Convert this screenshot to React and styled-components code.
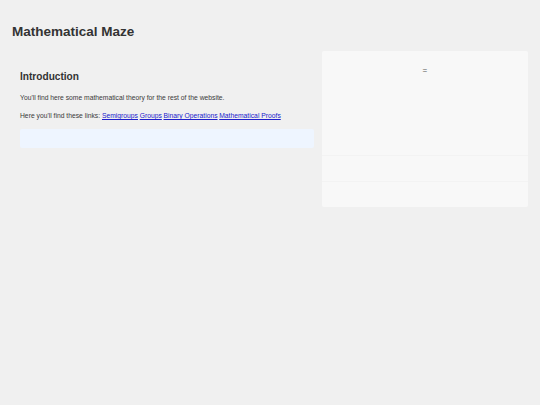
import React from 'react'
import styled, { createGlobalStyle } from 'styled-components'

const GlobalStyle = createGlobalStyle`
  body {
    margin: 0;
    background-color: #f0f0f0;
    color: #333;
    font-family: "Liberation Sans", Arial, sans-serif;
  }
`

const StyledPage = styled.div`
  padding: 0 12px;
`

const StyledTitle = styled.h1`
  font-size: 13.5px;
  line-height: 16px;
  font-weight: bold;
  margin: 0;
  padding-top: 24px;
  height: 27px;
`

const StyledMain = styled.main`
  display: grid;
  grid-template-columns: 3fr 2fr;
  align-items: start;
`

const StyledSection = styled.section`
  padding: 20px 8px 0 8px;
`

const StyledHeading = styled.h2`
  font-size: 10.125px;
  line-height: 12px;
  font-weight: bold;
  margin: 0 0 10px;
`

const StyledText = styled.p`
  font-size: 6.75px;
  line-height: 9px;
  margin: 0 0 9px;
  color: #3a3a3a;

  a {
    color: #2020cc;
    margin-right: 1.7px;
  }
`

const StyledNote = styled.div`
  background-color: #eef5ff;
  border-radius: 2px;
  height: 19px;
  margin-top: 5px;
`

const StyledPanel = styled.aside`
  background-color: #f8f8f8;
  border-radius: 2px;
  display: flex;
  flex-direction: column;
`

const StyledDisplay = styled.div`
  height: 104px;
  padding-top: 15px;
  box-sizing: border-box;
  text-align: center;
  font-size: 8px;
  line-height: 10px;
  color: #555;
`

const StyledRow = styled.div`
  height: 26px;
  box-sizing: border-box;
  border-top: 1px solid #f3f3f3;
`

const links = ['Semigroups', 'Groups', 'Binary Operations', 'Mathematical Proofs']

const App = () => (
  <>
    <GlobalStyle />
    <StyledPage>
      <StyledTitle>Mathematical Maze</StyledTitle>
      <StyledMain>
        <StyledSection>
          <StyledHeading>Introduction</StyledHeading>
          <StyledText>
            You'll find here some mathematical theory for the rest of the website.
          </StyledText>
          <StyledText>
            Here you'll find these links:{' '}
            {links.map(link => (
              <a key={link} href="#">
                {link}
              </a>
            ))}
          </StyledText>
          <StyledNote />
        </StyledSection>
        <StyledPanel>
          <StyledDisplay>=</StyledDisplay>
          <StyledRow />
          <StyledRow />
        </StyledPanel>
      </StyledMain>
    </StyledPage>
  </>
)

export default App
